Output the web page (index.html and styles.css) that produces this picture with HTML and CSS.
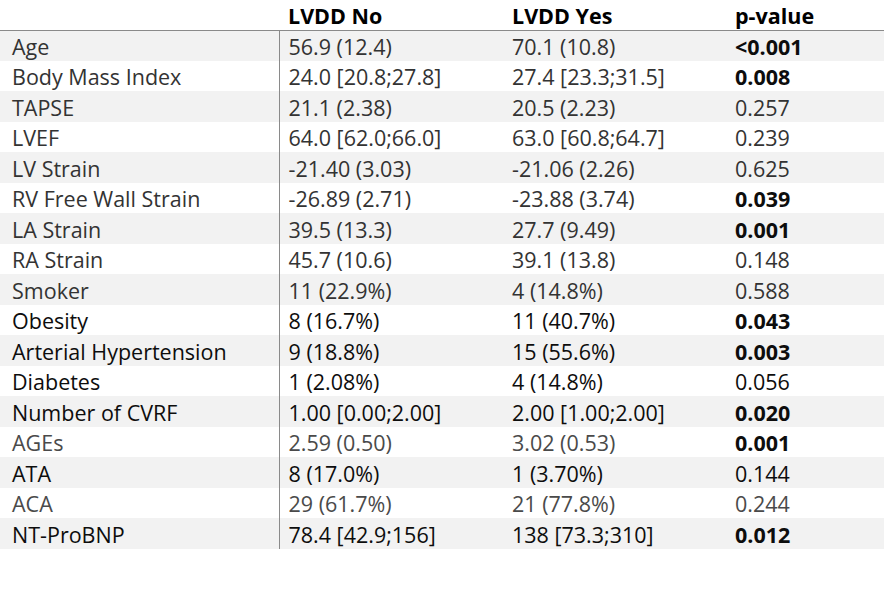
FILE: index.html
```html
<!DOCTYPE html>
<html lang="en">
<head>
<meta charset="utf-8">
<title>LVDD table</title>
<link rel="stylesheet" href="styles.css">
</head>
<body>
<table class="tbl">
  <thead>
    <tr>
      <th class="c1"></th>
      <th class="c2">LVDD No</th>
      <th class="c3">LVDD Yes</th>
      <th class="c4">p-value</th>
    </tr>
  </thead>
  <tbody>
    <tr class="odd g"><td class="c1">Age</td><td class="c2">56.9 (12.4)</td><td class="c3">70.1 (10.8)</td><td class="c4 b">&lt;0.001</td></tr>
    <tr class="g"><td class="c1">Body Mass Index</td><td class="c2">24.0 [20.8;27.8]</td><td class="c3">27.4 [23.3;31.5]</td><td class="c4 b">0.008</td></tr>
    <tr class="odd g"><td class="c1">TAPSE</td><td class="c2">21.1 (2.38)</td><td class="c3">20.5 (2.23)</td><td class="c4">0.257</td></tr>
    <tr class="g"><td class="c1">LVEF</td><td class="c2">64.0 [62.0;66.0]</td><td class="c3">63.0 [60.8;64.7]</td><td class="c4">0.239</td></tr>
    <tr class="odd g"><td class="c1">LV Strain</td><td class="c2">-21.40 (3.03)</td><td class="c3">-21.06 (2.26)</td><td class="c4">0.625</td></tr>
    <tr class="g"><td class="c1">RV Free Wall Strain</td><td class="c2">-26.89 (2.71)</td><td class="c3">-23.88 (3.74)</td><td class="c4 b">0.039</td></tr>
    <tr class="odd g"><td class="c1">LA Strain</td><td class="c2">39.5 (13.3)</td><td class="c3">27.7 (9.49)</td><td class="c4 b">0.001</td></tr>
    <tr class="g"><td class="c1">RA Strain</td><td class="c2">45.7 (10.6)</td><td class="c3">39.1 (13.8)</td><td class="c4">0.148</td></tr>
    <tr class="odd g"><td class="c1">Smoker</td><td class="c2">11 (22.9%)</td><td class="c3">4 (14.8%)</td><td class="c4">0.588</td></tr>
    <tr class="k"><td class="c1">Obesity</td><td class="c2">8 (16.7%)</td><td class="c3">11 (40.7%)</td><td class="c4 b">0.043</td></tr>
    <tr class="odd k"><td class="c1">Arterial Hypertension</td><td class="c2">9 (18.8%)</td><td class="c3">15 (55.6%)</td><td class="c4 b">0.003</td></tr>
    <tr class="k"><td class="c1">Diabetes</td><td class="c2">1 (2.08%)</td><td class="c3">4 (14.8%)</td><td class="c4">0.056</td></tr>
    <tr class="odd k"><td class="c1">Number of CVRF</td><td class="c2">1.00 [0.00;2.00]</td><td class="c3">2.00 [1.00;2.00]</td><td class="c4 b">0.020</td></tr>
    <tr class="m"><td class="c1">AGEs</td><td class="c2">2.59 (0.50)</td><td class="c3">3.02 (0.53)</td><td class="c4 b">0.001</td></tr>
    <tr class="odd k"><td class="c1">ATA</td><td class="c2">8 (17.0%)</td><td class="c3">1 (3.70%)</td><td class="c4">0.144</td></tr>
    <tr class="m"><td class="c1">ACA</td><td class="c2">29 (61.7%)</td><td class="c3">21 (77.8%)</td><td class="c4">0.244</td></tr>
    <tr class="odd k"><td class="c1">NT-ProBNP</td><td class="c2">78.4 [42.9;156]</td><td class="c3">138 [73.3;310]</td><td class="c4 b">0.012</td></tr>
  </tbody>
</table>
</body>
</html>
```

FILE: styles.css
```css
html, body {
  margin: 0;
  padding: 0;
  background: #ffffff;
}

.tbl {
  width: 884px;
  border-collapse: collapse;
  table-layout: fixed;
  font-family: "Open Sans", "Noto Sans", sans-serif;
  font-size: 21.5px;
  line-height: 26px;
  color: #111111;
}

.tbl th,
.tbl td {
  padding: 0;
  text-align: left;
  white-space: nowrap;
  vertical-align: middle;
}

.tbl thead th {
  height: 30px;
  padding-top: 2px;
  box-sizing: border-box;
  font-weight: bold;
  color: #000000;
  border-bottom: 1px solid #8a8a8a;
}

.tbl tbody td {
  height: 30.5px;
  padding-top: 3px;
  box-sizing: border-box;
}

.c1 { width: 279px; padding-left: 12px !important; box-sizing: border-box; }
.c2 { width: 233px; padding-left: 9px !important; box-sizing: border-box; }
.c3 { width: 223px; }
.c4 { width: auto; }

.tbl tbody td.c1 {
  border-right: 1px solid #8a8a8a;
}

.tbl tr.odd td {
  background: #f2f2f2;
}

.g td { color: #333333; }
.k td { color: #0d0d0d; }
.m td { color: #4a4a4a; }

.tbl td.b {
  font-weight: bold;
  color: #0d0d0d;
}
```
